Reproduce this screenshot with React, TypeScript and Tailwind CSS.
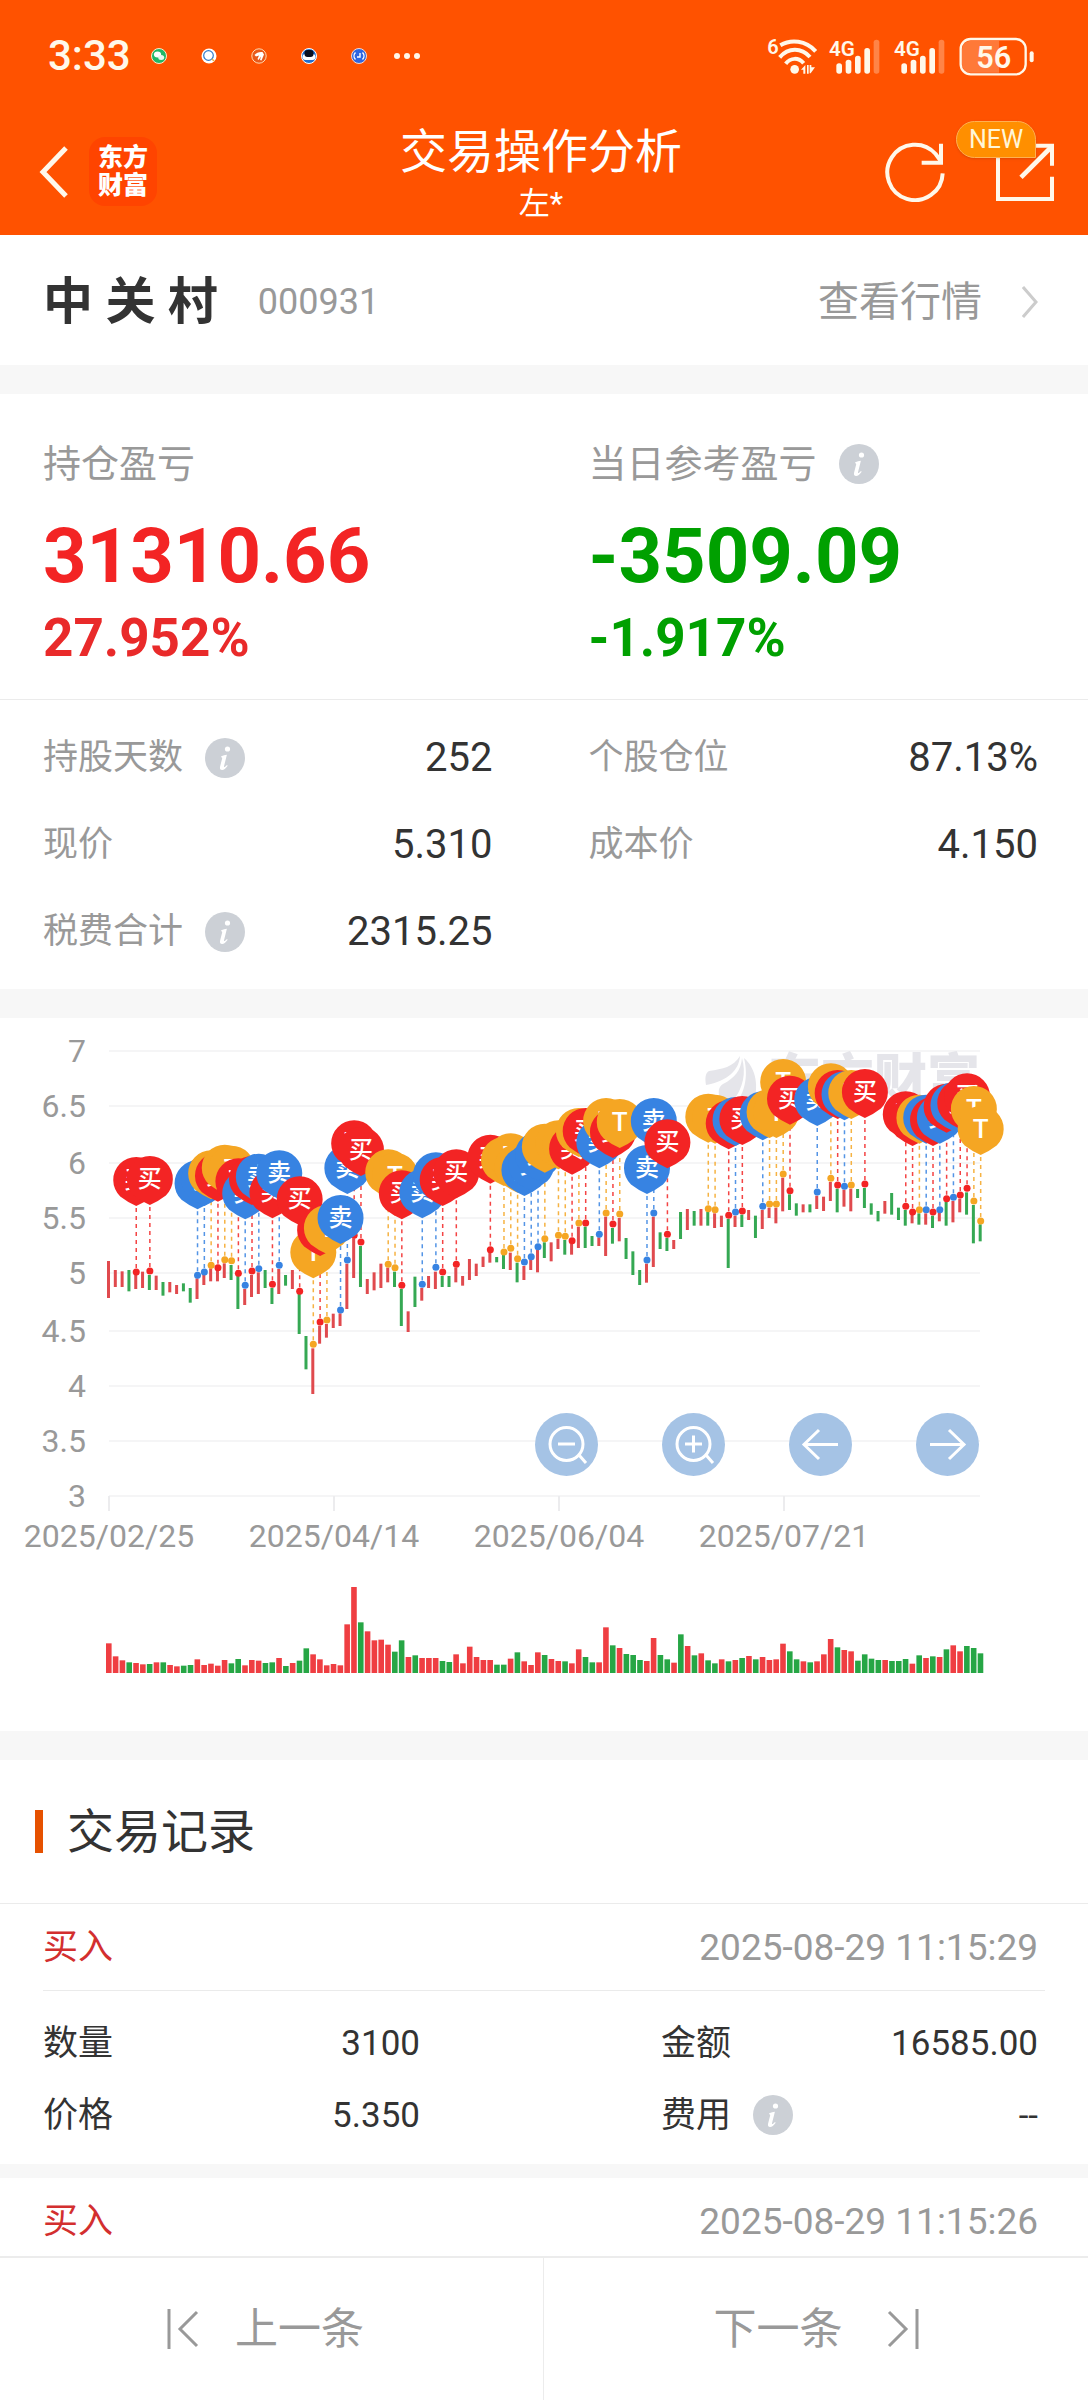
import React from 'react';

type Trend = 'r' | 'g';
type TradeKind = 'buy' | 'sell' | 't';

const UP = '#ef3e42';
const DOWN = '#26a645';

const kindColor: { [key in TradeKind]: string } = {
    buy: '#f32424',
    sell: '#3783e2',
    t: '#f5a623',
};

const kindLabel: { [key in TradeKind]: string } = {
    buy: '买',
    sell: '卖',
    t: 'T',
};

// volume and price extents are kept in thirds of a pixel
const volumes = [
    89, 50, 38, 32, 30, 26, 27, 32, 32, 24, 20, 22, 24, 41, 24, 28, 22, 39, 29, 42, 23, 39, 37, 30, 32, 45, 21, 30, 37, 74, 56, 41,
    23, 27, 23, 146, 258, 152, 125, 98, 100, 85, 64, 98, 48, 53, 45, 45, 45, 36, 33, 56, 29, 79, 48, 39, 39, 25, 25, 43, 62, 35, 24,
    62, 54, 42, 36, 35, 29, 71, 48, 32, 32, 137, 83, 75, 57, 54, 39, 36, 105, 54, 41, 31, 116, 81, 53, 59, 38, 29, 41, 35, 39, 45,
    51, 41, 48, 39, 41, 88, 65, 41, 35, 32, 35, 56, 102, 77, 69, 65, 37, 56, 43, 39, 39, 36, 36, 42, 28, 53, 45, 50, 48, 71, 83,
    65, 81, 75, 59,
];

// one letter per trading day
const volumeTrends =
    'rrrgrrgrgrrggrrrrrggrrrggrgrggrrrrrrrgrrrrggrgrrrggrrrrrrggrgrrrgrrgrrggrrgrgggrrggrgrgrggrgrgrgrrrrggrgrrrgrrggggrgggrgrgrgrrggg';

const prices: [number, number, Trend][] = [
    [723, 834, 'r'], [750, 801, 'r'], [754, 801, 'r'], [750, 814, 'g'], [765, 807, 'r'], [755, 804, 'r'], [765, 810, 'g'], [767, 810, 'r'],
    [786, 827, 'g'], [786, 817, 'r'], [795, 822, 'r'], [790, 814, 'g'], [804, 848, 'g'], [775, 837, 'r'], [765, 795, 'r'], [745, 784, 'r'],
    [750, 784, 'r'], [730, 774, 'r'], [735, 780, 'g'], [768, 867, 'g'], [807, 855, 'r'], [765, 831, 'r'], [757, 822, 'r'], [750, 804, 'g'],
    [804, 852, 'g'], [747, 822, 'r'], [765, 797, 'g'], [750, 807, 'r'], [820, 942, 'g'], [948, 1048, 'g'], [985, 1122, 'r'], [917, 971, 'r'],
    [912, 953, 'r'], [881, 924, 'r'], [880, 918, 'r'], [731, 867, 'r'], [655, 774, 'r'], [678, 801, 'g'], [777, 822, 'r'], [757, 811, 'r'],
    [731, 804, 'r'], [743, 787, 'r'], [755, 801, 'g'], [807, 918, 'g'], [874, 936, 'r'], [770, 861, 'g'], [804, 842, 'r'], [768, 804, 'r'],
    [755, 807, 'r'], [768, 801, 'g'], [768, 801, 'g'], [743, 787, 'r'], [768, 797, 'r'], [717, 780, 'r'], [731, 768, 'r'], [710, 741, 'r'],
    [695, 728, 'r'], [711, 727, 'g'], [705, 747, 'g'], [698, 750, 'r'], [728, 787, 'g'], [738, 780, 'r'], [718, 750, 'r'], [690, 757, 'r'],
    [667, 714, 'g'], [667, 724, 'r'], [657, 687, 'r'], [660, 704, 'g'], [672, 704, 'r'], [620, 684, 'r'], [620, 684, 'g'], [648, 678, 'g'],
    [652, 678, 'r'], [590, 708, 'r'], [624, 671, 'g'], [594, 664, 'r'], [654, 717, 'g'], [694, 765, 'g'], [750, 795, 'g'], [731, 788, 'r'],
    [590, 741, 'r'], [637, 687, 'g'], [654, 693, 'g'], [660, 687, 'r'], [576, 657, 'g'], [567, 630, 'r'], [573, 617, 'g'], [567, 617, 'r'],
    [576, 617, 'g'], [580, 624, 'r'], [587, 621, 'r'], [597, 744, 'g'], [587, 621, 'r'], [584, 621, 'g'], [570, 600, 'r'], [587, 654, 'g'],
    [570, 627, 'r'], [563, 594, 'r'], [563, 610, 'r'], [473, 574, 'r'], [523, 570, 'g'], [550, 587, 'g'], [553, 577, 'r'], [553, 577, 'g'],
    [527, 567, 'r'], [530, 573, 'r'], [486, 543, 'r'], [506, 577, 'g'], [509, 560, 'r'], [506, 574, 'r'], [507, 534, 'g'], [504, 564, 'g'],
    [550, 584, 'g'], [573, 604, 'g'], [543, 581, 'r'], [519, 584, 'g'], [563, 600, 'g'], [570, 617, 'g'], [585, 610, 'r'], [580, 614, 'g'],
    [580, 614, 'r'], [587, 624, 'g'], [577, 604, 'r'], [546, 617, 'g'], [543, 607, 'r'], [536, 577, 'r'], [517, 584, 'g'], [555, 670, 'g'],
    [613, 664, 'g'],
];

const trades: [number, number, TradeKind][] = [
    [4, 756, 'buy'], [6, 753, 'buy'], [13, 766, 'sell'], [14, 756, 'sell'], [15, 736, 't'], [16, 743, 'buy'], [17, 719, 't'], [18, 722, 't'],
    [19, 760, 'buy'], [20, 796, 'sell'], [21, 753, 'buy'], [22, 746, 'sell'], [24, 793, 'buy'], [25, 736, 'sell'], [28, 814, 'buy'],
    [30, 973, 't'], [31, 906, 'buy'], [32, 900, 't'], [34, 870, 'sell'], [35, 720, 'sell'], [36, 646, 'buy'], [37, 666, 'buy'],
    [41, 733, 't'], [42, 743, 't'], [43, 796, 'buy'], [46, 793, 'sell'], [48, 742, 'sell'], [49, 756, 'buy'], [51, 733, 'buy'],
    [56, 689, 'buy'], [58, 696, 't'], [59, 685, 't'], [60, 716, 't'], [61, 726, 'sell'], [62, 710, 'sell'], [63, 680, 'sell'],
    [64, 656, 't'], [66, 646, 't'], [67, 649, 't'], [68, 662, 'buy'], [69, 609, 't'], [70, 609, 'buy'], [72, 643, 'sell'], [73, 579, 't'],
    [74, 612, 'buy'], [75, 582, 't'], [79, 720, 'sell'], [80, 579, 'sell'], [82, 643, 'buy'], [88, 566, 't'], [89, 569, 't'],
    [91, 586, 'buy'], [92, 576, 'sell'], [93, 573, 'buy'], [96, 559, 'sell'], [97, 552, 't'], [98, 552, 't'], [99, 462, 't'],
    [100, 512, 'buy'], [104, 516, 'sell'], [106, 475, 't'], [107, 495, 'buy'], [108, 499, 'sell'], [109, 495, 't'], [111, 492, 'buy'],
    [117, 559, 'buy'], [118, 576, 'buy'], [119, 569, 't'], [120, 569, 'sell'], [121, 576, 'buy'], [122, 569, 'sell'], [123, 536, 'buy'],
    [124, 532, 'sell'], [125, 525, 'buy'], [126, 505, 'buy'], [127, 543, 't'], [128, 603, 't'],
];

const yTicks = [
    { label: '7', y: 33 },
    { label: '6.5', y: 88 },
    { label: '6', y: 145 },
    { label: '5.5', y: 200 },
    { label: '5', y: 255 },
    { label: '4.5', y: 313 },
    { label: '4', y: 368 },
    { label: '3.5', y: 423 },
    { label: '3', y: 478 },
];

const xTicks = [
    { label: '2025/02/25', x: 109 },
    { label: '2025/04/14', x: 334 },
    { label: '2025/06/04', x: 559 },
    { label: '2025/07/21', x: 784 },
];

const dayX = (i: number) => 109 + i * 6.81;
const priceY = (v: number) => v / 3 + 2;

const InfoButton: React.FC<{ label: string }> = ({ label }) => (
    <button type="button" aria-label={label} className="shrink-0">
        <svg className="h-10 w-10" viewBox="0 0 40 40">
            <circle cx="20" cy="20" r="20" fill="#ccd0d6" />
            <circle cx="22.5" cy="11" r="2.6" fill="#fff" />
            <path d="M16.3 18.2c2-.6 3.6-1.2 5.6-1.4l-2.9 11.4c-.3 1.3.7 1.3 2.9-1.2l.8.7c-2 2.8-3.8 4.2-5.6 4.2-1.9 0-2.5-1.5-2-3.5l2-7.700c.3-1.2-.2-1.4-1.1-1.5z" fill="#fff" />
        </svg>
    </button>
);

const AppDots: React.FC = () => (
    <svg className="h-4 w-[272px]" viewBox="0 0 272 16">
        <circle cx="8" cy="8" r="7.5" fill="#1fb866" stroke="#ffe9c9" />
        <ellipse cx="6.5" cy="6.5" rx="3.6" ry="3" fill="#fff" />
        <ellipse cx="10.2" cy="9.5" rx="3" ry="2.5" fill="#e8f8ee" />
        <circle cx="58" cy="8" r="7.5" fill="#fff" />
        <circle cx="57.5" cy="7.500" r="4.8" fill="none" stroke="#2f79c9" strokeWidth="1.2" />
        <path d="M61 11l2 2" stroke="#e8b23a" strokeWidth="1.5" />
        <circle cx="108" cy="8" r="7.2" fill="#e85a1b" stroke="#ffd9b0" />
        <path d="M103.5 7c2-2.500 5-3.5 8-3l1.5 2.5-2.5 6-1.5-.5 1-3.5-2.5 3.5-1-1 1.5-3.5-3 1z" fill="#fff" />
        <circle cx="158" cy="8" r="7.5" fill="#1f6fd0" stroke="#fff" />
        <rect x="151.5" y="6" width="13" height="6" rx="3" fill="#fff" />
        <rect x="153.5" y="2" width="9" height="7" rx="3" fill="#0b1020" />
        <circle cx="208" cy="8" r="7.5" fill="#2f66e0" stroke="#f6d9d0" />
        <path d="M204.5 4.500a5 5 0 0 0 0 7M211.5 4.500a5 5 0 0 1 0 7M209 5v4h-3" fill="none" stroke="#fff" strokeWidth="1.4" />
        <circle cx="246" cy="8" r="3" fill="#fff8ea" />
        <circle cx="256" cy="8" r="3" fill="#fff8ea" />
        <circle cx="266" cy="8" r="3" fill="#fff8ea" />
    </svg>
);

const SignalBars: React.FC<{ x: number }> = ({ x }) => (
    <g transform={`translate(${x} 0)`}>
        <text x="0" y="166" fontSize="62" fontWeight="600">4G</text>
        <rect x="22" y="188" width="17" height="31" rx="8" />
        <rect x="50" y="177" width="17" height="42" rx="8" />
        <rect x="78" y="165" width="17" height="54" rx="8" />
        <rect x="106" y="142" width="17" height="77" rx="8" />
        <rect x="134" y="117" width="17" height="102" rx="8" opacity="0.3" />
    </g>
);

const SystemIcons: React.FC = () => (
    <svg className="h-[43px] w-[271px] fill-[#fff8ea]" viewBox="666 103 813 129">
        <text x="670" y="160" fontSize="60" fontWeight="600">6</text>
        <g fill="none" stroke="#fff8ea" strokeWidth="12">
            <path d="M709 134C741 115 785 119 815 152" />
            <path d="M707 170C733 140 772 140 798 169" />
            <path d="M725 189C740 170 764 170 779 188" />
        </g>
        <circle cx="752" cy="206" r="13" />
        <path d="M771 207l13-14v26h-6v-12zM789 193h5v26h-5zM797 193h5v7h11l-13 18h-3z" />
        <SignalBars x={855} />
        <SignalBars x={1050} />
        <rect x="1250" y="115" width="195" height="106" rx="30" fill="none" stroke="#fff8ea" strokeWidth="7" />
        <path d="M1280 120h85v96h-85a26 26 0 0 1-26-26v-44a26 26 0 0 1 26-26z" opacity="0.24" />
        <rect x="1457" y="152" width="12" height="33" rx="6" />
        <text x="1349" y="203" fontSize="92" fontWeight="600" textAnchor="middle">56</text>
    </svg>
);

const Header: React.FC = () => (
    <header className="bg-[#ff5200] text-white">
        <div className="flex h-27 items-center pt-1 pr-[51px] pl-12">
            <span className="mr-5 text-[42px] leading-none font-medium text-[#fff8ea]">3:33</span>
            <AppDots />
            <div className="ml-auto">
                <SystemIcons />
            </div>
        </div>
        <div className="grid h-[127px] grid-cols-[1fr_auto_1fr] items-center pr-[34px] pl-7">
            <div className="flex items-center gap-5">
                <button type="button" aria-label="返回">
                    <svg className="h-[52px] w-[41px]" viewBox="0 0 41 52" fill="none" stroke="#fff8ea" strokeWidth="5">
                        <path d="M38 2L15 26l23 24" />
                    </svg>
                </button>
                <span className="flex h-[69px] w-[68px] items-center justify-center rounded-2xl bg-[#ff4400] text-center text-[25px] leading-7 font-black">
                    东方
                    <br />
                    财富
                </span>
            </div>
            <div className="pt-2 text-center">
                <h1 className="text-[47px] leading-14">交易操作分析</h1>
                <p className="text-[31px] leading-12">左*</p>
            </div>
            <div className="flex items-center justify-end gap-[51px]">
                <button type="button" aria-label="刷新">
                    <svg className="h-[60px] w-[60px]" viewBox="0 0 180 180" fill="none" stroke="#fff8ea" strokeWidth="12">
                        <path d="M173 94A83 83 0 1 1 152 36L168 58" />
                        <path d="M168 5v57h-58" />
                    </svg>
                </button>
                <button type="button" aria-label="分享" className="relative">
                    <svg className="h-[58px] w-[58px]" viewBox="0 0 174 174" fill="none" stroke="#fff8ea" strokeWidth="12">
                        <path d="M110 8h58v60M168 101v67H6V8h40" />
                        <path d="M75 103L166 12" strokeWidth="14" />
                    </svg>
                    <span className="absolute -top-[22px] -left-10 rounded-full rounded-br-none border border-[#ffb052] bg-[#ff8f00] px-3 text-[25px] leading-[35px] text-[#fff6d8] shadow-sm">
                        NEW
                    </span>
                </button>
            </div>
        </div>
    </header>
);

const ChartPin: React.FC<{ x: number; y: number; kind: TradeKind }> = ({ x, y, kind }) => (
    <g transform={`translate(${x} ${y})`} fill={kindColor[kind]}>
        <path d="M0 26Q-9 22 -16 16.500A23 23 0 1 1 16 16.500Q9 22 0 26z" />
        <text y={kind === 't' ? 9 : 8} fontSize={kind === 't' ? 26 : 24} fontWeight="500" textAnchor="middle" fill="#fff">{kindLabel[kind]}</text>
    </g>
);

const PriceChart: React.FC = () => (
    <svg className="block h-auto w-full" viewBox="0 0 1088 713">
        {yTicks.map(tick => (
            <g key={tick.label}>
                <line x1="109" x2="980" y1={tick.y} y2={tick.y} stroke="#f5f5f6" strokeWidth="2" />
                <text x="86" y={tick.y + 11} fontSize="32" textAnchor="end" fill="#999">{tick.label}</text>
            </g>
        ))}
        {xTicks.map(tick => (
            <g key={tick.label}>
                <line x1={tick.x} x2={tick.x} y1="478" y2="493" stroke="#ececee" strokeWidth="2" />
                <text x={tick.x} y="529" fontSize="32" textAnchor="middle" fill="#999">{tick.label}</text>
            </g>
        ))}
        <g fill="#e5e5ea">
            <path d="M706 67c-1-6-1-12 3-14 14-2 24-4 31-15-1 14-12 25-34 29z" />
            <path d="M720 80c-2-5-2-11 3-14 12-6 18-14 19-26 4 14 2 30-10 44z" />
            <path d="M744 40c12 10 16 30 8 48l-20 2c12-12 17-30 12-50z" />
            <text x="768" y="80" fontSize="53" fontWeight="900">东方财富</text>
        </g>
        {prices.map(([high, low, trend], i) => (
            <rect key={i} x={dayX(i) - 2} y={priceY(high)} width="3" height={(low - high) / 3} fill={trend === 'r' ? '#e04a4e' : '#35a853'} />
        ))}
        {trades.map(([day, v, kind]) => (
            <g key={day}>
                <line x1={dayX(day)} x2={dayX(day)} y1={priceY(v) - 64} y2={priceY(v)} stroke={kindColor[kind]} strokeWidth="1.5" strokeDasharray="4 4" opacity="0.85" />
                <circle cx={dayX(day)} cy={priceY(v)} r="3.5" fill={kindColor[kind]} />
            </g>
        ))}
        {trades.map(([day, v, kind]) => (
            <ChartPin key={day} x={dayX(day)} y={priceY(v) - 92} kind={kind} />
        ))}
        {volumes.map((v, i) => (
            <rect key={i} x={dayX(i) - 3} y={655 - v / 3} width="5.6" height={v / 3} fill={volumeTrends[i] === 'r' ? UP : DOWN} />
        ))}
    </svg>
);

const chartActions = [
    { label: '缩小', path: 'M23 31h17M44 42l7 8', lens: true },
    { label: '放大', path: 'M23 31h17M31.5 22.5v17M44 42l7 8', lens: true },
    { label: '向左', path: 'M49 31.5H15M30 17L15 31.5 30 46', lens: false },
    { label: '向右', path: 'M14 31.5h34M33 17l15 14.5L33 46', lens: false },
];

const ChartSection: React.FC = () => (
    <section className="relative bg-white">
        <PriceChart />
        <div className="absolute top-[395px] right-[109px] flex gap-16">
            {chartActions.map(action => (
                <button key={action.label} type="button" aria-label={action.label}>
                    <svg className="h-[63px] w-[63px]" viewBox="0 0 63 63" fill="none" stroke="#fff" strokeWidth="3">
                        <circle cx="31.5" cy="31.5" r="31.5" fill="#a5c3e5" stroke="none" />
                        {action.lens && <circle cx="31.5" cy="31" r="16.5" />}
                        <path d={action.path} />
                    </svg>
                </button>
            ))}
        </div>
    </section>
);

const StatRow: React.FC<{ label: string; value: string; info?: boolean }> = ({ label, value, info }) => (
    <div className="flex h-[87px] items-center">
        <dt className="flex items-center gap-[22px] text-[35px] text-[#999]">
            {label}
            {info && <InfoButton label={`${label}说明`} />}
        </dt>
        <dd className="ml-auto text-[40px] text-[#333]">{value}</dd>
    </div>
);

const RecordField: React.FC<{ label: string; value: string; info?: boolean }> = ({ label, value, info }) => (
    <div className="flex h-[72px] items-center text-[#333]">
        <dt className="flex items-center gap-[22px] text-[35px]">
            {label}
            {info && <InfoButton label={`${label}说明`} />}
        </dt>
        <dd className="ml-auto text-[35px]">{value}</dd>
    </div>
);

const RecordHead: React.FC<{ time: string }> = ({ time }) => (
    <div className="flex h-[86px] items-center justify-between pr-[50px] pl-[43px]">
        <span className="text-[35px] text-[#d32f2f]">买入</span>
        <time className="text-[37px] text-[#999]">{time}</time>
    </div>
);

const Divider: React.FC = () => <div className="h-[29px] bg-[#f7f7f7]" />;

const App: React.FC = () => {
    return (
        <div className="flex h-screen flex-col bg-white font-['Roboto','Noto_Sans_CJK_SC',sans-serif] leading-none text-[#333]">
            <Header />

            <main className="min-h-0 flex-1 overflow-y-auto [scrollbar-width:none]">
                <section className="flex h-[130px] items-center pt-1 pr-[50px] pl-[43px]">
                    <h2 className="text-[50px] font-bold">中 关 村</h2>
                    <span className="ml-10 text-[36px] text-[#999]">000931</span>
                    <a href="#quote" className="ml-auto flex items-center gap-10 text-[41px] text-[#999]">
                        查看行情
                        <svg className="h-8 w-4" viewBox="0 0 16 32" fill="none" stroke="#ccc" strokeWidth="3">
                            <path d="M1 1l13 15L1 31" />
                        </svg>
                    </a>
                </section>

                <Divider />

                <section className="grid grid-cols-2 gap-x-24 border-b border-[#ebebeb] pt-12 pr-[50px] pb-[25px] pl-[43px]">
                    <div>
                        <p className="flex h-11 items-center text-[38px] text-[#999]">持仓盈亏</p>
                        <p className="mt-6 text-[76px] leading-[92px] font-bold text-[#f32424]">31310.66</p>
                        <p className="text-[53px] leading-[72px] font-bold text-[#e92a2a]">27.952%</p>
                    </div>
                    <div>
                        <p className="flex h-11 items-center gap-[22px] text-[38px] text-[#999]">
                            当日参考盈亏
                            <InfoButton label="当日参考盈亏说明" />
                        </p>
                        <p className="mt-6 text-[76px] leading-[92px] font-bold text-[#00a000]">-3509.09</p>
                        <p className="text-[53px] leading-[72px] font-bold text-[#00a000]">-1.917%</p>
                    </div>
                </section>

                <dl className="grid grid-cols-2 gap-x-24 py-[14px] pr-[50px] pl-[43px]">
                    <StatRow label="持股天数" value="252" info />
                    <StatRow label="个股仓位" value="87.13%" />
                    <StatRow label="现价" value="5.310" />
                    <StatRow label="成本价" value="4.150" />
                    <StatRow label="税费合计" value="2315.25" info />
                </dl>

                <Divider />
                <ChartSection />
                <Divider />

                <section>
                    <div className="flex h-36 items-center gap-6 border-b border-[#ebebeb] pl-[35px]">
                        <span className="h-[43px] w-2 bg-[#e65100]" />
                        <h2 className="text-[47px]">交易记录</h2>
                    </div>

                    <RecordHead time="2025-08-29 11:15:29" />
                    <div className="mx-[43px] h-px bg-[#ebebeb]" />
                    <dl className="grid grid-cols-2 gap-x-[241px] pt-4 pr-[50px] pb-[13px] pl-[43px]">
                        <RecordField label="数量" value="3100" />
                        <RecordField label="金额" value="16585.00" />
                        <RecordField label="价格" value="5.350" />
                        <RecordField label="费用" value="--" info />
                    </dl>
                    <div className="h-[14px] bg-[#f7f7f7]" />
                    <RecordHead time="2025-08-29 11:15:26" />
                </section>
            </main>

            <footer className="grid h-36 grid-cols-2 border-t-2 border-[#ececec] bg-white text-[43px] text-[#999]">
                <button type="button" className="flex items-center justify-center gap-9 border-r border-[#ececec] pr-3">
                    <svg className="h-10 w-8" viewBox="0 0 32 40" fill="none" stroke="#999" strokeWidth="3">
                        <path d="M2 0v40M30 3L13 20l17 17" />
                    </svg>
                    上一条
                </button>
                <button type="button" className="flex items-center justify-center gap-11">
                    下一条
                    <svg className="h-10 w-8" viewBox="0 0 32 40" fill="none" stroke="#999" strokeWidth="3">
                        <path d="M30 0v40M2 3l17 17L2 37" />
                    </svg>
                </button>
            </footer>
        </div>
    );
};

export default App;
